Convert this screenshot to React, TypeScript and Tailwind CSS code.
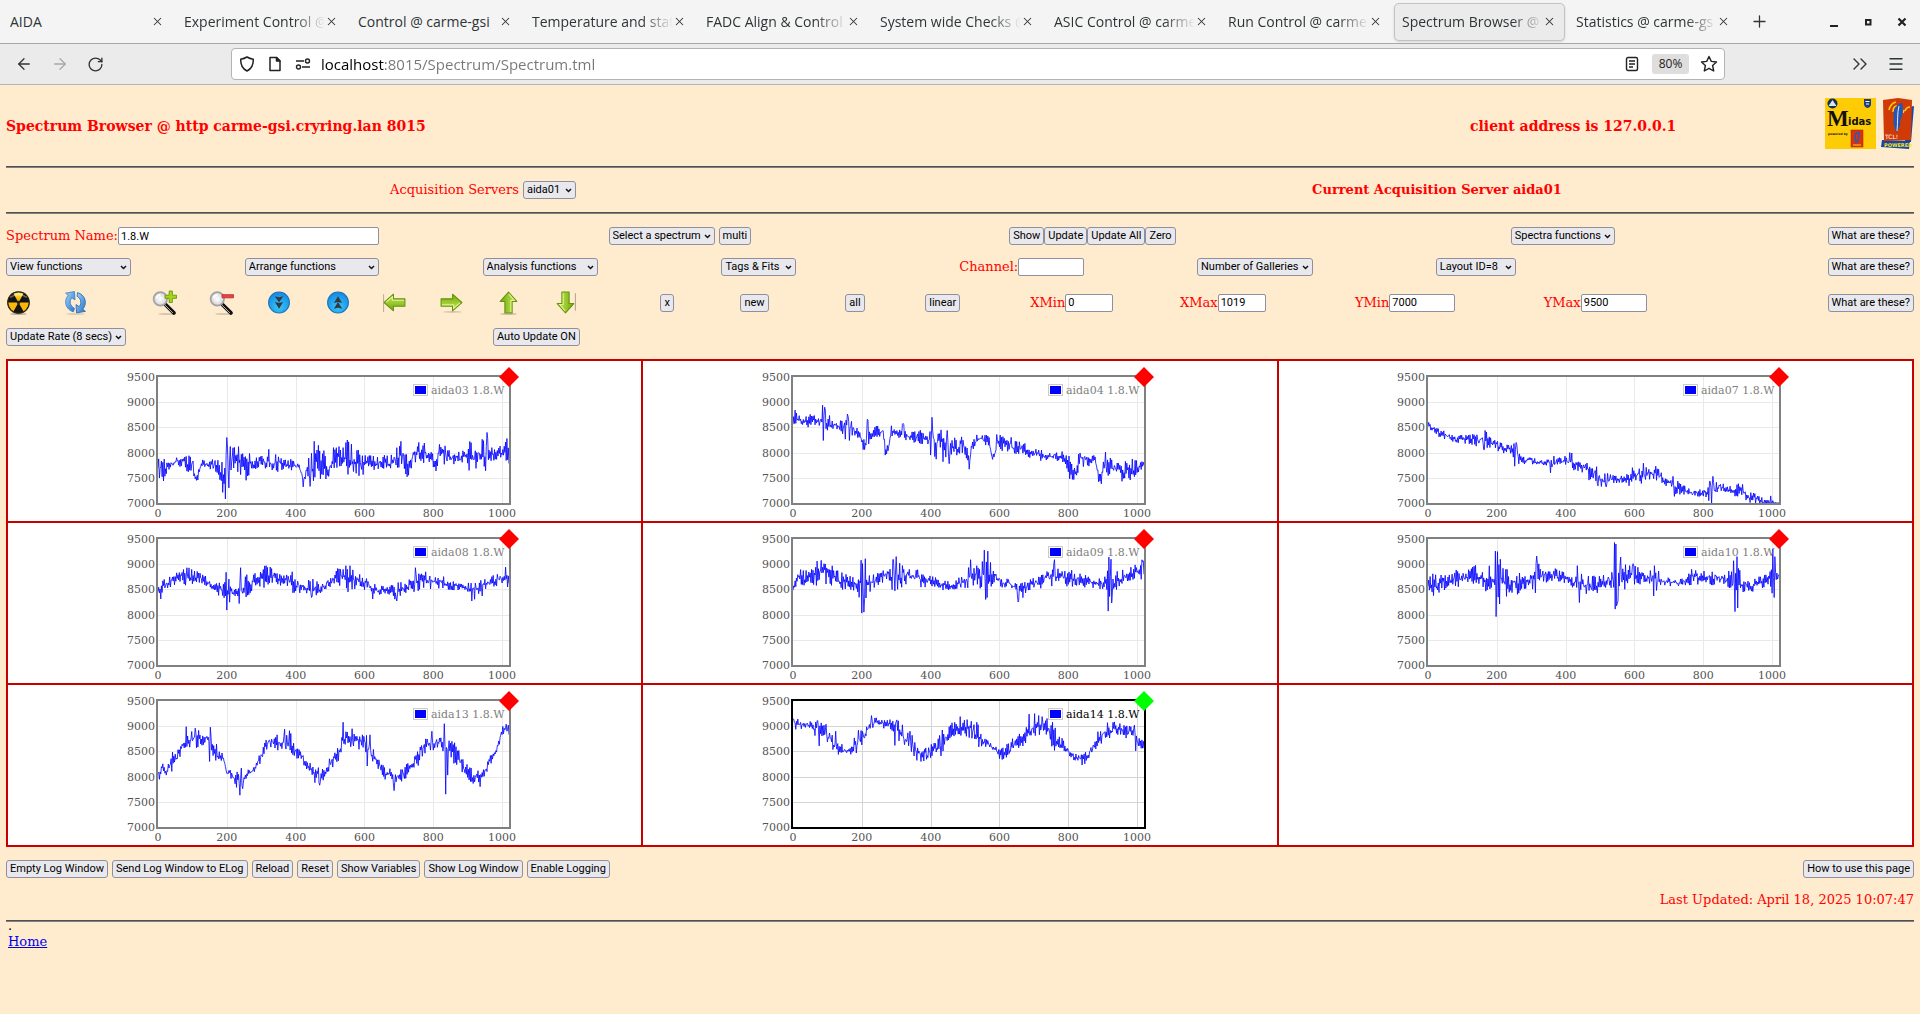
import React from 'react';
import { ArrowLeft, ArrowRight, ChevronsRight, Menu, Plus, RotateCw, X } from 'lucide-react';

type Knot = [x: number, mean: number, spread: number];
type Spike = [x: number, value: number];
type Spectrum = { name: string; active?: boolean; knots: Knot[]; spikes: Spike[] };

const spectra: Spectrum[] = [
  {
    name: 'aida03 1.8.W',
    knots: [[0, 7650, 180], [20, 7680, 200], [30, 7760, 90], [60, 7830, 70], [85, 7790, 150], [100, 7780, 100], [108, 7530, 100], [116, 7520, 100], [124, 7770, 70], [155, 7760, 70], [165, 7750, 180], [175, 7600, 200], [185, 7550, 300], [200, 7700, 500], [212, 7850, 250], [230, 7800, 320], [245, 7750, 220], [265, 7750, 260], [280, 7800, 120], [310, 7820, 80], [320, 7830, 250], [330, 7800, 140], [370, 7780, 120], [410, 7700, 60], [422, 7450, 150], [432, 7700, 100], [445, 7630, 300], [460, 7780, 280], [478, 7850, 260], [492, 7620, 160], [505, 7800, 200], [515, 7920, 170], [540, 7950, 200], [550, 7950, 300], [575, 7850, 260], [590, 7750, 180], [620, 7800, 110], [670, 7800, 120], [700, 7900, 180], [712, 7920, 240], [728, 7650, 140], [740, 7920, 110], [755, 7960, 190], [780, 7950, 200], [795, 7950, 120], [808, 7680, 80], [815, 8000, 130], [835, 7950, 180], [850, 7900, 90], [885, 7880, 130], [900, 7900, 100], [908, 7850, 300], [930, 7950, 200], [955, 7980, 280], [975, 7990, 130], [1005, 8010, 100], [1015, 7980, 300], [1020, 7900, 150]],
    spikes: [[196, 7080], [200, 8300], [206, 7300], [234, 8120], [422, 7320], [442, 7330], [454, 8225], [550, 8250], [706, 8225], [906, 8220], [956, 8400], [1014, 8280]],
  },
  {
    name: 'aida04 1.8.W',
    knots: [[0, 8650, 100], [8, 8700, 130], [20, 8620, 70], [45, 8630, 120], [75, 8610, 100], [88, 8600, 320], [105, 8580, 140], [125, 8540, 70], [155, 8500, 200], [165, 8500, 220], [180, 8440, 90], [195, 8350, 80], [203, 8120, 90], [210, 8180, 100], [216, 8400, 250], [225, 8380, 100], [240, 8420, 110], [262, 8420, 50], [270, 8050, 90], [278, 8080, 90], [286, 8440, 90], [310, 8360, 80], [320, 8420, 170], [335, 8300, 70], [370, 8320, 110], [395, 8230, 90], [405, 8300, 300], [420, 8200, 250], [440, 8120, 250], [455, 8120, 290], [475, 8050, 170], [490, 8180, 140], [502, 8080, 150], [512, 7780, 110], [520, 8130, 110], [545, 8300, 90], [570, 8200, 90], [578, 7950, 90], [586, 7980, 60], [595, 8200, 140], [630, 8150, 130], [680, 8050, 100], [715, 7950, 130], [730, 7930, 60], [780, 7950, 90], [798, 7870, 160], [804, 7780, 300], [815, 7600, 120], [825, 7620, 120], [832, 7900, 130], [855, 7880, 140], [878, 7850, 60], [888, 7550, 110], [897, 7480, 90], [902, 7780, 150], [910, 7780, 200], [925, 7720, 140], [945, 7690, 80], [956, 7630, 150], [985, 7680, 170], [1010, 7700, 100], [1020, 7780, 80]],
    spikes: [[86, 8940], [88, 8240], [92, 8900], [160, 8720], [164, 8240], [216, 8660], [268, 7950], [320, 8580], [400, 7950], [404, 8700], [416, 7870], [436, 7820], [448, 8440], [454, 7780], [512, 7670], [592, 8360], [804, 7480], [896, 7380], [908, 8010], [956, 7430]],
  },
  {
    name: 'aida07 1.8.W',
    knots: [[0, 8540, 60], [15, 8470, 50], [35, 8390, 80], [50, 8340, 80], [75, 8270, 50], [105, 8250, 90], [140, 8250, 100], [155, 8260, 70], [166, 8280, 190], [185, 8200, 80], [210, 8120, 90], [240, 8050, 70], [254, 7980, 200], [270, 7880, 100], [300, 7840, 60], [330, 7800, 40], [350, 7800, 50], [362, 7790, 130], [380, 7830, 60], [405, 7830, 90], [415, 7850, 140], [430, 7780, 110], [455, 7720, 100], [470, 7600, 130], [490, 7580, 150], [505, 7440, 110], [520, 7450, 110], [550, 7470, 60], [585, 7470, 100], [600, 7550, 90], [625, 7580, 160], [645, 7550, 90], [665, 7580, 120], [690, 7450, 90], [715, 7300, 150], [740, 7260, 80], [770, 7190, 60], [805, 7200, 60], [820, 7220, 200], [835, 7260, 120], [850, 7330, 80], [885, 7260, 80], [908, 7250, 140], [930, 7130, 100], [955, 7090, 70], [975, 6990, 80], [1000, 6980, 80], [1020, 6960, 70]],
    spikes: [[2, 8600], [162, 8060], [166, 8440], [250, 8180], [252, 7730], [256, 8200], [356, 7600], [412, 8000], [494, 7340], [518, 7320], [594, 7700], [626, 7790], [662, 7730], [712, 7530], [716, 7130], [820, 7430], [824, 7000], [828, 7530], [996, 7140]],
  },
  {
    name: 'aida08 1.8.W',
    knots: [[0, 8450, 120], [8, 8500, 200], [20, 8600, 100], [45, 8680, 70], [65, 8750, 120], [85, 8720, 180], [105, 8760, 110], [135, 8680, 80], [165, 8520, 80], [190, 8480, 140], [200, 8480, 300], [215, 8450, 90], [235, 8420, 100], [245, 8480, 280], [270, 8620, 130], [290, 8700, 130], [315, 8760, 180], [345, 8720, 110], [380, 8680, 100], [395, 8580, 140], [425, 8550, 80], [450, 8520, 160], [475, 8520, 80], [495, 8650, 90], [520, 8720, 160], [550, 8740, 220], [580, 8690, 130], [610, 8600, 100], [635, 8480, 90], [665, 8500, 60], [690, 8460, 130], [715, 8540, 90], [745, 8620, 130], [780, 8680, 170], [820, 8650, 110], [860, 8580, 90], [895, 8520, 60], [912, 8460, 180], [940, 8590, 100], [970, 8660, 90], [1005, 8740, 110], [1020, 8650, 120]],
    spikes: [[8, 8310], [84, 8930], [200, 8090], [198, 8840], [236, 8220], [240, 8930], [314, 8970], [390, 8850], [446, 8340], [546, 8970], [552, 8450], [558, 8970], [624, 8310], [694, 8270], [748, 8930], [778, 8850], [912, 8270], [942, 8370], [1010, 8940]],
  },
  {
    name: 'aida09 1.8.W',
    knots: [[0, 8570, 80], [15, 8700, 160], [40, 8720, 130], [60, 8800, 170], [75, 8800, 230], [100, 8850, 210], [120, 8730, 170], [150, 8660, 130], [185, 8580, 100], [194, 8570, 200], [202, 8550, 480], [212, 8600, 400], [222, 8600, 160], [250, 8720, 90], [275, 8800, 120], [292, 8800, 280], [315, 8780, 200], [335, 8770, 110], [365, 8720, 130], [400, 8640, 100], [440, 8580, 80], [475, 8580, 80], [505, 8700, 150], [520, 8820, 200], [545, 8700, 160], [558, 8750, 450], [568, 8700, 300], [585, 8740, 160], [610, 8650, 90], [640, 8580, 50], [655, 8430, 170], [675, 8520, 110], [700, 8620, 90], [735, 8720, 160], [760, 8800, 200], [790, 8760, 160], [825, 8700, 120], [860, 8650, 90], [890, 8600, 100], [910, 8600, 150], [918, 8650, 450], [930, 8650, 330], [945, 8700, 130], [975, 8800, 120], [1005, 8860, 120], [1020, 8850, 220]],
    spikes: [[198, 9080], [200, 8030], [206, 8050], [292, 9090], [296, 8470], [300, 9150], [516, 9090], [556, 9280], [560, 8300], [566, 9260], [654, 8250], [760, 9090], [916, 8070], [918, 9140], [924, 9100], [926, 8230], [1016, 9050]],
  },
  {
    name: 'aida10 1.8.W',
    knots: [[0, 8620, 90], [10, 8580, 180], [40, 8620, 140], [65, 8690, 100], [85, 8720, 160], [115, 8740, 130], [135, 8790, 180], [155, 8720, 90], [170, 8720, 220], [185, 8720, 230], [196, 8650, 400], [208, 8650, 350], [225, 8630, 220], [260, 8620, 180], [290, 8630, 110], [305, 8700, 200], [316, 8720, 300], [330, 8760, 120], [365, 8790, 110], [395, 8730, 90], [415, 8650, 50], [435, 8640, 180], [455, 8580, 140], [485, 8570, 180], [510, 8660, 110], [530, 8720, 180], [545, 8700, 500], [560, 8720, 280], [580, 8780, 150], [610, 8770, 160], [635, 8730, 60], [650, 8700, 160], [660, 8670, 250], [680, 8650, 70], [715, 8630, 80], [745, 8650, 60], [755, 8740, 130], [790, 8740, 130], [825, 8750, 130], [855, 8700, 90], [880, 8680, 160], [895, 8620, 430], [910, 8600, 150], [945, 8580, 100], [975, 8670, 100], [992, 8700, 90], [1003, 8750, 400], [1012, 8750, 180], [1020, 8800, 130]],
    spikes: [[196, 9260], [198, 7960], [202, 9250], [208, 8210], [210, 9100], [316, 9160], [312, 8430], [434, 8970], [440, 8240], [542, 9430], [544, 8110], [546, 9400], [550, 8230], [560, 9140], [596, 9010], [658, 8970], [656, 8370], [888, 9070], [892, 8060], [898, 9150], [900, 8130], [1002, 9300], [1006, 8340], [1008, 9150]],
  },
  {
    name: 'aida13 1.8.W',
    knots: [[0, 8080, 90], [10, 8140, 170], [25, 8080, 60], [40, 8270, 180], [55, 8400, 130], [70, 8580, 70], [82, 8700, 90], [110, 8760, 150], [145, 8740, 80], [155, 8650, 300], [170, 8480, 180], [190, 8350, 80], [200, 8100, 80], [220, 7980, 110], [240, 7930, 210], [255, 8030, 60], [280, 8130, 70], [310, 8560, 110], [325, 8700, 110], [355, 8690, 140], [380, 8650, 220], [400, 8520, 120], [425, 8330, 100], [450, 8120, 80], [470, 8000, 130], [490, 8150, 100], [520, 8400, 130], [540, 8750, 130], [560, 8730, 170], [600, 8680, 100], [612, 8500, 300], [630, 8400, 90], [650, 8130, 90], [685, 7960, 150], [710, 8030, 130], [735, 8180, 90], [755, 8400, 160], [780, 8640, 120], [820, 8680, 100], [840, 8550, 200], [865, 8450, 180], [890, 8160, 110], [915, 8000, 110], [945, 8050, 110], [965, 8330, 70], [985, 8500, 80], [998, 8900, 70], [1020, 8930, 80]],
    spikes: [[82, 8990], [108, 8960], [152, 8980], [150, 8300], [238, 7630], [246, 7760], [368, 8940], [456, 7880], [470, 7830], [538, 9080], [564, 8950], [608, 8210], [616, 8830], [686, 7720], [796, 8900], [832, 9050], [836, 7650], [842, 8030], [936, 7800], [1012, 9040]],
  },
  {
    name: 'aida14 1.8.W',
    active: true,
    knots: [[0, 9080, 90], [15, 9020, 90], [40, 9040, 50], [60, 8980, 90], [75, 8880, 200], [95, 8850, 130], [110, 8750, 140], [120, 8570, 80], [130, 8560, 130], [150, 8500, 70], [165, 8520, 50], [180, 8620, 180], [200, 8750, 200], [215, 8920, 70], [235, 9060, 80], [260, 9060, 90], [290, 9020, 100], [305, 8900, 230], [325, 8780, 130], [345, 8600, 180], [365, 8470, 130], [390, 8440, 130], [415, 8580, 90], [435, 8680, 200], [460, 8930, 110], [485, 8990, 130], [515, 8950, 150], [535, 8850, 200], [555, 8700, 90], [585, 8530, 60], [605, 8430, 100], [630, 8550, 130], [655, 8760, 150], [680, 8880, 190], [705, 9030, 180], [735, 9000, 140], [755, 8800, 230], [780, 8640, 120], [805, 8480, 70], [825, 8360, 70], [845, 8340, 100], [865, 8520, 150], [885, 8680, 180], [905, 8880, 80], [925, 8930, 130], [955, 8950, 90], [980, 8860, 150], [1000, 8720, 160], [1020, 8680, 110]],
    spikes: [[0, 9150], [72, 9110], [76, 8610], [96, 9040], [124, 8900], [132, 8440], [228, 9210], [296, 8620], [300, 9090], [340, 8900], [380, 8310], [430, 8410], [486, 9190], [506, 9130], [534, 9080], [608, 8340], [686, 9240], [702, 9250], [724, 9190], [760, 8520], [840, 8230], [914, 9070], [992, 9020], [996, 8510]],
  },
];

const PLOT = { left: 33, top: 16, width: 351, height: 126 };
const plotX = (v: number) => PLOT.left + (v / 1020) * PLOT.width;
const plotY = (v: number) => PLOT.top + ((9500 - Math.min(9500, Math.max(7000, v))) / 2500) * PLOT.height;

function tracePath({ knots, spikes }: Spectrum, seed: number) {
  let state = seed * 7919 + 13;
  const random = () => {
    state = (state * 1103515245 + 12345) % 2147483648;
    return state / 2147483648;
  };
  const peaks = new Map(spikes);
  let d = '';
  let k = 0;
  for (let x = 0; x <= 1020; x += 2) {
    while (k < knots.length - 2 && knots[k + 1][0] <= x) k++;
    const [x0, m0, s0] = knots[k];
    const [x1, m1, s1] = knots[k + 1];
    const t = (x - x0) / (x1 - x0);
    const sign = (x / 2) % 2 ? 1 : -1;
    const noise = (s0 + (s1 - s0) * t) * ((random() * 2 - 1) * 0.8 + sign * 0.5);
    const value = peaks.get(x) ?? m0 + (m1 - m0) * t + noise;
    d += `${x ? 'L' : 'M'}${plotX(x).toFixed(1)} ${plotY(value).toFixed(1)}`;
  }
  return d;
}

function Chart({ spectrum, seed }: { spectrum: Spectrum; seed: number }) {
  const right = PLOT.left + PLOT.width;
  const bottom = PLOT.top + PLOT.height;
  const frame = spectrum.active ? '#000' : '#808080';
  const grid = spectrum.active ? '#d4d4d4' : '#e9e9e9';
  return (
    <svg width="400" height="160" viewBox="0 0 400 160" role="img" aria-label={spectrum.name} className="font-['DejaVu_Serif',serif] text-[11px]">
      {[200, 400, 600, 800, 1000].map((v) => (
        <path key={v} d={`M${Math.round(plotX(v)) + 0.5} ${PLOT.top}V${bottom}`} stroke={grid} />
      ))}
      {[7500, 8000, 8500, 9000].map((v) => (
        <path key={v} d={`M${PLOT.left} ${Math.round(plotY(v)) + 0.5}H${right}`} stroke={grid} />
      ))}
      <path d={tracePath(spectrum, seed)} fill="none" stroke="#0000ff" strokeOpacity="0.8" strokeLinejoin="round" />
      <rect x={PLOT.left - 1} y={PLOT.top - 1} width={PLOT.width + 2} height={PLOT.height + 2} fill="none" stroke={frame} strokeWidth="2" />
      <rect x="288.5" y="23.5" width="14" height="11" fill="#fff" stroke="#ccc" />
      <rect x="290" y="25" width="11" height="8" fill="#0000ff" />
      <text x="306" y="33" fill={spectrum.active ? '#000' : '#808080'}>{spectrum.name}</text>
      <path d={`M${right} 6L${right + 10} 16L${right} 26L${right - 10} 16Z`} fill={spectrum.active ? '#00ff00' : '#ff0000'} />
      <g fill="#545454">
        {[9500, 9000, 8500, 8000, 7500, 7000].map((v) => (
          <text key={v} x="30" y={plotY(v) + 4} textAnchor="end">{v}</text>
        ))}
        {[0, 200, 400, 600, 800, 1000].map((v) => (
          <text key={v} x={plotX(v)} y="156" textAnchor="middle">{v}</text>
        ))}
      </g>
    </svg>
  );
}

function Button({ children }: { children: React.ReactNode }) {
  return (
    <button type="button" className="h-[18px] shrink-0 whitespace-nowrap rounded-[3px] border border-[#8f8f9d] bg-[#e9e9ed] px-[3px] font-['Roboto',sans-serif] text-[11px] leading-4 text-black">
      {children}
    </button>
  );
}

function Select({ label, width, id }: { label: string; width: string; id?: string }) {
  return (
    <span className={`relative inline-block h-[18px] shrink-0 ${width}`}>
      <select id={id} aria-label={label} className="block h-full w-full appearance-none rounded-[3px] border border-[#8f8f9d] bg-[#e9e9ed] pl-[3px] font-['Roboto',sans-serif] text-[11px] leading-4 text-black">
        <option>{label}</option>
      </select>
      <svg width="7" height="5" viewBox="0 0 7 5" className="pointer-events-none absolute top-[7px] right-[4px]">
        <path d="M1 1L3.5 3.5L6 1" fill="none" stroke="#111" strokeWidth="1.5" />
      </svg>
    </span>
  );
}

function Field({ label, value = '', width, id }: { label: string; value?: string; width: string; id: string }) {
  return (
    <div className="flex items-center">
      <label htmlFor={id} className="whitespace-nowrap">{label}</label>
      <input id={id} type="text" defaultValue={value} className={`h-[18px] rounded-[2px] border border-[#8f8f9d] bg-white px-[2px] font-['Roboto',sans-serif] text-[11px] leading-4 text-black ${width}`} />
    </div>
  );
}

const Rule = () => <hr className="h-[2px] border-0 border-t border-t-[#50504f] bg-[#808080]" />;

const arrowPath = 'M2 12L11 4V8.5H22V15.5H11V20Z';

function Defs() {
  return (
    <svg width="0" height="0" className="absolute" aria-hidden="true">
      <defs>
        <linearGradient id="green" x1="0" y1="0" x2="0" y2="1"><stop offset="0" stopColor="#d3ec5c" /><stop offset="1" stopColor="#69a80c" /></linearGradient>
        <radialGradient id="blue" cx=".5" cy=".7" r=".7"><stop offset="0" stopColor="#35c8fb" /><stop offset="1" stopColor="#1686e0" /></radialGradient>
        <linearGradient id="yellow" x1="0" y1="0" x2="0" y2="1"><stop offset="0" stopColor="#fff0a0" /><stop offset=".5" stopColor="#fcc80c" /><stop offset="1" stopColor="#f39a05" /></linearGradient>
        <linearGradient id="sky" x1="0" y1="0" x2="1" y2="1"><stop offset="0" stopColor="#a9d7f8" /><stop offset="1" stopColor="#1f72cc" /></linearGradient>
        <radialGradient id="lens"><stop offset="0" stopColor="#fff" /><stop offset="1" stopColor="#d4d4d8" /></radialGradient>
      </defs>
    </svg>
  );
}

function ArrowGlyph({ turn }: { turn: number }) {
  return (
    <g transform={`rotate(${turn} 12 12)`}>
      <path d={arrowPath} fill="url(#green)" stroke="#64950f" strokeLinejoin="round" />
      <path d="M4 11.5L10 6.5V9.8H21" fill="none" stroke="#ecf9a8" strokeOpacity=".8" />
    </g>
  );
}

function Magnifier({ plus }: { plus?: boolean }) {
  return (
    <g>
      <ellipse cx="14" cy="23" rx="8" ry="1" fill="#00000028" />
      <path d="M13 14L21 22" stroke="#111" strokeWidth="3.6" strokeLinecap="round" />
      <path d="M12.5 14.5L20 22" stroke="#ddd" strokeWidth=".8" />
      <circle cx="8" cy="8.5" r="6.5" fill="url(#lens)" stroke="#a2a2a6" strokeWidth="1.6" />
      <path d="M4.5 8A4 4 0 0 1 8 4.5" stroke="#fff" strokeWidth="1.5" fill="none" />
      {plus ? (
        <path d="M16.5 1H19.5V5H23.5V8H19.5V12H16.5V8H12.5V5H16.5Z" fill="#a5d61c" stroke="#699b0c" strokeWidth=".9" />
      ) : (
        <path d="M12.5 4.5H23.5V7.5H12.5Z" fill="#e84545" stroke="#b92b2b" strokeWidth=".8" />
      )}
    </g>
  );
}

const tools: { label: string; glyph: React.ReactNode }[] = [
  {
    label: 'Zero all',
    glyph: (
      <g>
        <ellipse cx="12" cy="23" rx="8" ry="1" fill="#00000040" />
        <circle cx="12" cy="12" r="10.5" fill="#141414" />
        <path d="M12 12L6.8 2.9A10.5 10.5 0 0 0 1.6 12Z" fill="#141414" />
        <path d="M12 12L6.8 2.9A10.5 10.5 0 0 1 17.2 2.9Z" fill="url(#yellow)" />
        <path d="M12 12L22.4 12A10.5 10.5 0 0 1 17.2 21.1Z" fill="#fbb70a" />
        <path d="M12 12L6.8 21.1A10.5 10.5 0 0 1 1.6 12Z" fill="#fbb70a" />
        <circle cx="12" cy="12" r="1.6" fill="#222" />
        <circle cx="12" cy="12" r="10.3" fill="none" stroke="#2b2714" strokeWidth="1.2" />
        <path d="M4 7Q12 1.5 20 7" fill="none" stroke="#fff" strokeOpacity=".35" strokeWidth="1.5" />
      </g>
    ),
  },
  {
    label: 'Refresh',
    glyph: (
      <g strokeLinejoin="round">
        <ellipse cx="12" cy="23" rx="9" ry="1" fill="#00000020" />
        <path d="M10 21C3 19 0 11 5 5L2.5 3L11 1.5L11.5 9.5L8.5 7.5C5.5 11 7 15.5 11 17.5Z" fill="url(#sky)" stroke="#3b80c8" strokeWidth=".8" />
        <path d="M14 2.5C21 4.5 24 12.5 19 18.5L21.5 20.5L13 22L12.5 14L15.5 16C18.5 12.5 17 8 13.5 6Z" fill="url(#sky)" stroke="#2667b2" strokeWidth=".8" />
      </g>
    ),
  },
  { label: 'Zoom in', glyph: <Magnifier plus /> },
  { label: 'Zoom out', glyph: <Magnifier /> },
  {
    label: 'Page down',
    glyph: (
      <g>
        <circle cx="12.5" cy="12" r="10" fill="url(#blue)" stroke="#1673bd" />
        <path d="M8.5 6L12.5 7L16.5 6L12.5 12ZM8.5 11.5L12.5 12.5L16.5 11.5L12.5 18Z" fill="#33393f" />
      </g>
    ),
  },
  {
    label: 'Page up',
    glyph: (
      <g>
        <circle cx="12.5" cy="12" r="10" fill="url(#blue)" stroke="#1673bd" />
        <path d="M8.5 12.5L12.5 11.5L16.5 12.5L12.5 6ZM8.5 18L12.5 17L16.5 18L12.5 11.5Z" fill="#33393f" />
      </g>
    ),
  },
  { label: 'Left', glyph: <g><path d="M1.5 4V21" stroke="#a09484" strokeOpacity=".7" /><ArrowGlyph turn={0} /></g> },
  { label: 'Right', glyph: <g><ellipse cx="13" cy="21" rx="9" ry="1" fill="#00000025" /><ArrowGlyph turn={180} /></g> },
  { label: 'Up', glyph: <g><ellipse cx="12" cy="23" rx="8" ry="1" fill="#00000030" /><ArrowGlyph turn={90} /></g> },
  { label: 'Down', glyph: <g><path d="M21.5 3V20" stroke="#a09484" strokeOpacity=".8" /><ArrowGlyph turn={270} /></g> },
];

const tabs: { title: string; fade?: boolean; selected?: boolean }[] = [
  { title: 'AIDA' },
  { title: 'Experiment Control @', fade: true },
  { title: 'Control @ carme-gsi' },
  { title: 'Temperature and stat', fade: true },
  { title: 'FADC Align & Control', fade: true },
  { title: 'System wide Checks @', fade: true },
  { title: 'ASIC Control @ carme', fade: true },
  { title: 'Run Control @ carme-', fade: true },
  { title: 'Spectrum Browser @', fade: true, selected: true },
  { title: 'Statistics @ carme-gs', fade: true },
];

function BrowserChrome() {
  return (
    <header className="font-['Open_Sans',sans-serif] text-[#2e3436]">
      <div className="flex h-11 items-center border-b border-[#a9a9a9] bg-[#f4f4f4] pl-[2px]">
        {tabs.map(({ title, fade, selected }) => (
          <div key={title} className="w-[174px] min-w-0 pr-[3px]">
            <div className={`flex h-[38px] items-center rounded-[5px] border pr-[8px] pl-[7px] ${selected ? 'border-[#c2c2c2] bg-[#ebebeb] shadow-sm' : 'border-transparent'}`}>
              <button type="button" className={`min-w-0 flex-1 overflow-hidden text-left text-[14px] leading-5 whitespace-nowrap ${fade ? '[mask-image:linear-gradient(to_right,black_78%,transparent)]' : ''}`}>
                {title}
              </button>
              <button type="button" aria-label={`Close ${title}`}><X size={13} strokeWidth={1.9} /></button>
            </div>
          </div>
        ))}
        <button type="button" aria-label="New tab" className="ml-2"><Plus size={19} strokeWidth={1.6} /></button>
        <div className="mr-[11px] ml-auto flex gap-[20px] text-black">
          <button type="button" aria-label="Minimize"><svg width="14" height="14"><path d="M3 11H11" stroke="#222" strokeWidth="2" /></svg></button>
          <button type="button" aria-label="Restore"><svg width="14" height="14"><path d="M5 5H9.5V9.5H5Z" fill="none" stroke="#222" strokeWidth="2" /></svg></button>
          <button type="button" aria-label="Close window"><svg width="14" height="14"><path d="M3.5 3.5L10.5 10.5M10.5 3.5L3.5 10.5" stroke="#222" strokeWidth="2.2" /></svg></button>
        </div>
      </div>
      <div className="flex h-[41px] items-center border-b border-[#b4b4b4] bg-[#ebebeb]">
        <div className="flex w-[231px] shrink-0 items-center gap-[18px] pl-[15px]">
          <button type="button" aria-label="Back"><ArrowLeft size={18} strokeWidth={1.7} /></button>
          <button type="button" aria-label="Forward" className="text-[#a9a9a9]"><ArrowRight size={18} strokeWidth={1.7} /></button>
          <button type="button" aria-label="Reload"><RotateCw size={17} strokeWidth={1.9} /></button>
        </div>
        <div className="flex h-8 flex-1 items-center rounded-[4px] border border-[#b3b3b3] bg-white pr-[6px] pl-[7px] text-[#222]">
          <svg width="16" height="16" viewBox="0 0 16 16" fill="none" stroke="currentColor" strokeWidth="1.5" strokeLinejoin="round">
            <path d="M8 1C10 2.3 12 2.9 14.3 3.2C14.5 8.5 13 12.5 8 15C3 12.5 1.5 8.5 1.7 3.2C4 2.9 6 2.3 8 1Z" />
          </svg>
          <svg width="14" height="16" viewBox="0 0 14 16" fill="none" stroke="currentColor" strokeWidth="1.5" strokeLinejoin="round" className="ml-[13px]">
            <path d="M2 1.5H8.5L12 5V14.5H2Z" /><path d="M8.5 1.5V5H12Z" fill="currentColor" />
          </svg>
          <svg width="16" height="14" viewBox="0 0 16 14" fill="none" stroke="currentColor" strokeWidth="1.4" className="ml-[13px]">
            <path d="M1 4H9M7 10H15" /><circle cx="12.5" cy="4" r="2" /><circle cx="3.5" cy="10" r="2" />
          </svg>
          <input
            type="text"
            aria-label="Address"
            defaultValue="localhost:8015/Spectrum/Spectrum.tml"
            className="ml-[10px] min-w-0 flex-1 bg-[linear-gradient(to_right,#000_63px,#767676_63px)] bg-clip-text text-[15px] leading-5 text-transparent"
          />
          <button type="button" aria-label="Reader view">
            <svg width="14" height="16" viewBox="0 0 14 16" fill="none" stroke="currentColor" strokeWidth="1.4"><rect x="1.5" y="1.5" width="11" height="13" rx="1.5" /><path d="M4 5H10M4 8H10M4 11H8" /></svg>
          </button>
          <button type="button" className="ml-[13px] h-5 w-[37px] rounded-[3px] bg-[#dedede] text-[12px] leading-5">80%</button>
          <button type="button" aria-label="Bookmark" className="ml-[11px]">
            <svg width="18" height="18" viewBox="0 0 18 18" fill="none" stroke="currentColor" strokeWidth="1.4" strokeLinejoin="round"><path d="M9 1.5L11.3 6.4L16.5 7L12.6 10.5L13.7 16L9 13.3L4.3 16L5.4 10.5L1.5 7L6.7 6.4Z" /></svg>
          </button>
        </div>
        <div className="flex w-[195px] shrink-0 items-center justify-end gap-[15px] pr-[15px]">
          <button type="button" aria-label="More tools"><ChevronsRight size={24} strokeWidth={1.4} /></button>
          <button type="button" aria-label="Open menu"><Menu size={18} strokeWidth={1.7} /></button>
        </div>
      </div>
    </header>
  );
}

function MidasLogo() {
  return (
    <svg width="51" height="51" viewBox="0 0 51 51" role="img" aria-label="Midas">
      <rect width="51" height="51" fill="#fdcc05" />
      <circle cx="7.5" cy="5.5" r="5" fill="#143257" /><path d="M3.5 8L7.5 2L11.5 8Z" fill="#dde6ee" />
      <path d="M39 1H46V6Q46 9 42.5 10Q39 9 39 6Z" fill="#1d3c83" /><path d="M40.5 3.5H44.5M41 6H44" stroke="#fff" strokeWidth="1" />
      <text x="2" y="28" fontFamily="Liberation Serif, serif" fontWeight="bold" fontSize="23" fill="#111">M</text>
      <text x="23" y="27" fontFamily="DejaVu Sans, sans-serif" fontWeight="bold" fontSize="10" fill="#111">idas</text>
      <text x="3" y="37" fontFamily="DejaVu Sans, sans-serif" fontWeight="bold" fontSize="3" fill="#111">powered by</text>
      <rect x="26" y="32" width="12" height="17" fill="#d8340c" stroke="#b01804" strokeWidth=".5" />
      <path d="M34 34C29 35 30 39 31 45M34 34C35 38 33 41 32 45" fill="none" stroke="#2d58b8" strokeWidth="1.5" />
      <path d="M28 47H36" stroke="#ffd400" strokeWidth="1" />
    </svg>
  );
}

function TclLogo() {
  return (
    <svg width="33" height="51" viewBox="0 0 33 51" role="img" aria-label="Tcl powered">
      <path d="M24 10L33 8L30 44L24 44Z" fill="#1546a8" />
      <path d="M1 42L29 43L28 51L0 49Z" fill="#1546a8" />
      <path d="M2 2L17 0L31 2L30 42L3 43Z" fill="#d03a07" />
      <path d="M8 12C9 7 11 5 15 4M12 14C12 10 14 8 16 8M24 13C25 10 27 9 29 9M22 15L23 12" fill="none" stroke="#ffc716" strokeWidth="1.6" />
      <path d="M21 5C14 6 11 15 13 21C11 26 14 28 15 35C18 30 20 28 19 23C22 18 23 10 21 5Z" fill="#2257b5" />
      <path d="M18 8C16 15 17 24 16 33" stroke="#f3e5d8" strokeWidth="1" fill="none" />
      <text x="4" y="41" fontFamily="DejaVu Sans, sans-serif" fontSize="6" fill="#fff">TCL!</text>
      <text x="3" y="49" fontFamily="DejaVu Sans, sans-serif" fontWeight="bold" fontSize="5" fill="#ffe600">POWERED</text>
    </svg>
  );
}

export default function App() {
  return (
    <div className="min-h-screen bg-[#ffebcd]">
      <Defs />
      <BrowserChrome />
      <main className="px-[6px] font-['DejaVu_Serif',serif] text-[13px] leading-4 text-[#ff0000]">
        <div className="grid h-[81px] grid-cols-[1464fr_355fr_auto] items-center">
          <h1 className="text-[14px] font-bold">Spectrum Browser @ http carme-gsi.cryring.lan 8015</h1>
          <h2 className="text-[14px] font-bold">client address is 127.0.0.1</h2>
          <div className="flex gap-[5px] self-start pt-[13px]"><MidasLogo /><TclLogo /></div>
        </div>
        <Rule />
        <div className="grid h-[44px] grid-cols-2 items-center text-center">
          <div className="flex items-center justify-center gap-1">
            <label htmlFor="servers">Acquisition Servers</label>
            <Select id="servers" label="aida01" width="w-[53px]" />
          </div>
          <strong>Current Acquisition Server aida01</strong>
        </div>
        <Rule />
        <div className="mt-[13px] grid grid-cols-[603fr_401fr_502fr_317fr_auto] items-center">
          <Field id="name" label="Spectrum Name:" value="1.8.W" width="w-[261px]" />
          <div className="flex gap-1"><Select label="Select a spectrum" width="w-[106px]" /><Button>multi</Button></div>
          <div className="flex"><Button>Show</Button><Button>Update</Button><Button>Update All</Button><Button>Zero</Button></div>
          <Select label="Spectra functions" width="w-[104px]" />
          <Button>What are these?</Button>
        </div>
        <div className="mt-[13px] grid grid-cols-[239fr_238fr_239fr_238fr_238fr_239fr_392fr_auto] items-center">
          <Select label="View functions" width="w-[125px]" />
          <Select label="Arrange functions" width="w-[134px]" />
          <Select label="Analysis functions" width="w-[115px]" />
          <Select label="Tags & Fits" width="w-[75px]" />
          <Field id="channel" label="Channel:" width="w-[66px]" />
          <Select label="Number of Galleries" width="w-[116px]" />
          <Select label="Layout ID=8" width="w-[80px]" />
          <Button>What are these?</Button>
        </div>
        <div className="mt-[14px] mb-[1px] grid grid-cols-[57fr_89fr_57fr_57fr_59fr_57fr_57fr_57fr_57fr_108fr_80fr_105fr_80fr_105fr_150fr_175fr_189fr_284fr_auto] items-center justify-items-start">
          {tools.map(({ label, glyph }) => (
            <button key={label} type="button" aria-label={label} className="block"><svg width="25" height="25" viewBox="0 0 24 24">{glyph}</svg></button>
          ))}
          <Button>x</Button>
          <Button>new</Button>
          <Button>all</Button>
          <Button>linear</Button>
          <Field id="xmin" label="XMin" value="0" width="w-[48px]" />
          <Field id="xmax" label="XMax" value="1019" width="w-[48px]" />
          <Field id="ymin" label="YMin" value="7000" width="w-[66px]" />
          <Field id="ymax" label="YMax" value="9500" width="w-[66px]" />
          <Button>What are these?</Button>
        </div>
        <div className="mt-[13px] grid grid-cols-[487fr_1421fr] items-center justify-items-start">
          <Select label="Update Rate (8 secs)" width="w-[120px]" />
          <Button>Auto Update ON</Button>
        </div>
        <section aria-label="Gallery" className="mt-[13px] grid grid-cols-3 border-r-2 border-b-2 border-[#c80000] bg-white">
          {[...spectra, null].map((spectrum, i) => (
            <div key={i} className="flex h-[162px] justify-center border-t-2 border-l-2 border-[#c80000]">
              {spectrum && <Chart spectrum={spectrum} seed={i + 1} />}
            </div>
          ))}
        </section>
        <div className="mt-[13px] flex gap-1">
          <Button>Empty Log Window</Button>
          <Button>Send Log Window to ELog</Button>
          <Button>Reload</Button>
          <Button>Reset</Button>
          <Button>Show Variables</Button>
          <Button>Show Log Window</Button>
          <Button>Enable Logging</Button>
          <span className="ml-auto"><Button>How to use this page</Button></span>
        </div>
        <p className="mt-[14px] mb-[12px] text-right">Last Updated: April 18, 2025 10:07:47</p>
        <Rule />
        <div className="pl-[2px] text-black">
          <p className="h-3 leading-[8px]">.</p>
          <a href="#home" className="text-[#0000ee] underline">Home</a>
        </div>
      </main>
    </div>
  );
}
